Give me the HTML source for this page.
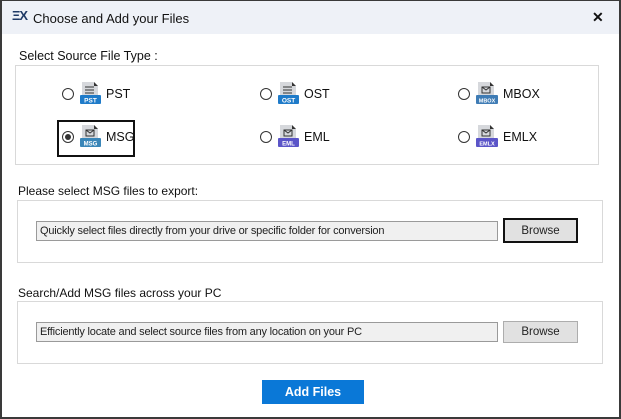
<!DOCTYPE html>
<html><head><style>
*{box-sizing:border-box;margin:0;padding:0}
body{width:621px;height:419px;background:#fff;font-family:"Liberation Sans",sans-serif;font-size:12px;color:#111;position:relative;overflow:hidden}
.frame{position:absolute;left:0;top:0;width:621px;height:419px;border:2px solid #3a3a3a;border-top-width:1px}
.title{position:absolute;left:2px;top:1px;width:617px;height:33px;background:#eef1f7}
.a{position:absolute}
.box{position:absolute;border:1px solid #d9d9d9}
.radio{position:absolute;width:12px;height:12px;border:1px solid #333;border-radius:50%;background:#fff}
.lbl{position:absolute;font-size:12.5px}
.tb{position:absolute;border:1px solid #9a9a9a;background:#f0f0f0;font-size:11px;padding:3px 0 0 3px;height:20px;color:#222;letter-spacing:-0.2px}
.btn{position:absolute;background:#e1e1e1;border:1px solid #adadad;font-size:11.5px;text-align:center;color:#222}
</style></head><body>
<div class="title"></div>
<div class="a" style="left:12px;top:8px;font-weight:bold;font-size:13px;color:#1f3a66;letter-spacing:-1px">ΞX</div>
<div class="a" style="left:33px;top:11px;font-size:13px;color:#111">Choose and Add your Files</div>
<div class="a" style="left:592px;top:9px;font-size:14px;font-weight:bold">✕</div>
<div class="a" style="left:19px;top:49px;font-size:12.5px">Select Source File Type :</div>
<div class="box" style="left:15px;top:65px;width:584px;height:100px"></div>

<svg width="0" height="0" style="position:absolute"><defs>
<g id="doc"><path d="M2 0H14L18 4V20H2Z" fill="#d6d8dc"/><path d="M14 0V4H18Z" fill="#333"/></g>
</defs></svg>

<!-- row1 -->
<div class="radio" style="left:62px;top:88px"></div>
<svg class="a" style="left:80px;top:82px" width="22" height="24"><use href="#doc"/><path d="M5 5h9M5 8h9M5 11h9" stroke="#333" stroke-width="1"/><rect x="0" y="13" width="21" height="9" rx="1" fill="#1f7bc9"/><text x="10.5" y="20.5" font-size="6.5" font-weight="bold" fill="#fff" text-anchor="middle" font-family="Liberation Sans">PST</text></svg>
<div class="lbl" style="left:106px;top:87px">PST</div>

<div class="radio" style="left:260px;top:88px"></div>
<svg class="a" style="left:278px;top:82px" width="22" height="24"><use href="#doc"/><path d="M5 5h9M5 8h9M5 11h9" stroke="#333" stroke-width="1"/><rect x="0" y="13" width="21" height="9" rx="1" fill="#1f7bc9"/><text x="10.5" y="20.5" font-size="6.5" font-weight="bold" fill="#fff" text-anchor="middle" font-family="Liberation Sans">OST</text></svg>
<div class="lbl" style="left:304px;top:87px">OST</div>

<div class="radio" style="left:458px;top:88px"></div>
<svg class="a" style="left:476px;top:82px" width="24" height="24"><use href="#doc"/><rect x="6" y="5" width="8" height="6" fill="none" stroke="#333"/><path d="M6 5l4 3 4-3" fill="none" stroke="#333"/><rect x="0" y="13" width="22" height="9" rx="1" fill="#3f7cb5"/><text x="11" y="20.5" font-size="5.5" font-weight="bold" fill="#fff" text-anchor="middle" font-family="Liberation Sans">MBOX</text></svg>
<div class="lbl" style="left:503px;top:87px">MBOX</div>

<!-- row2 -->
<div class="a" style="left:57px;top:120px;width:78px;height:37px;border:2px solid #111"></div>
<div class="radio" style="left:62px;top:131px"></div>
<div class="a" style="left:65px;top:134px;width:6px;height:6px;border-radius:50%;background:#333"></div>
<svg class="a" style="left:80px;top:125px" width="22" height="24"><use href="#doc"/><rect x="6" y="5" width="8" height="6" fill="none" stroke="#333"/><path d="M6 5l4 3 4-3" fill="none" stroke="#333"/><rect x="0" y="13" width="21" height="9" rx="1" fill="#3a86b8"/><text x="10.5" y="20.5" font-size="6" font-weight="bold" fill="#fff" text-anchor="middle" font-family="Liberation Sans">MSG</text></svg>
<div class="lbl" style="left:106px;top:130px">MSG</div>

<div class="radio" style="left:260px;top:131px"></div>
<svg class="a" style="left:278px;top:125px" width="22" height="24"><use href="#doc"/><rect x="6" y="5" width="8" height="6" fill="none" stroke="#333"/><path d="M6 5l4 3 4-3" fill="none" stroke="#333"/><rect x="0" y="13" width="21" height="9" rx="1" fill="#5b55c8"/><text x="10.5" y="20.5" font-size="6" font-weight="bold" fill="#fff" text-anchor="middle" font-family="Liberation Sans">EML</text></svg>
<div class="lbl" style="left:304px;top:130px">EML</div>

<div class="radio" style="left:458px;top:131px"></div>
<svg class="a" style="left:476px;top:125px" width="24" height="24"><use href="#doc"/><rect x="6" y="5" width="8" height="6" fill="none" stroke="#333"/><path d="M6 5l4 3 4-3" fill="none" stroke="#333"/><rect x="0" y="13" width="22" height="9" rx="1" fill="#5b55c8"/><text x="11" y="20.5" font-size="5.5" font-weight="bold" fill="#fff" text-anchor="middle" font-family="Liberation Sans">EMLX</text></svg>
<div class="lbl" style="left:503px;top:130px">EMLX</div>

<div class="a" style="left:18px;top:184px;font-size:12px">Please select MSG files to export:</div>
<div class="box" style="left:17px;top:200px;width:586px;height:63px"></div>
<div class="tb" style="left:36px;top:221px;width:462px">Quickly select files directly from your drive or specific folder for conversion</div>
<div class="btn" style="left:503px;top:218px;width:75px;height:25px;border:2px solid #111;padding-top:5px">Browse</div>

<div class="a" style="left:18px;top:286px;font-size:12px">Search/Add MSG files across your PC</div>
<div class="box" style="left:17px;top:301px;width:586px;height:63px"></div>
<div class="tb" style="left:36px;top:322px;width:462px">Efficiently locate and select source files from any location on your PC</div>
<div class="btn" style="left:503px;top:321px;width:75px;height:22px;padding-top:4px">Browse</div>

<div class="a" style="left:262px;top:380px;width:102px;height:24px;background:#0a78d7;color:#fff;font-weight:bold;font-size:12.5px;text-align:center;line-height:24px">Add Files</div>
<div class="frame"></div>
</body></html>
